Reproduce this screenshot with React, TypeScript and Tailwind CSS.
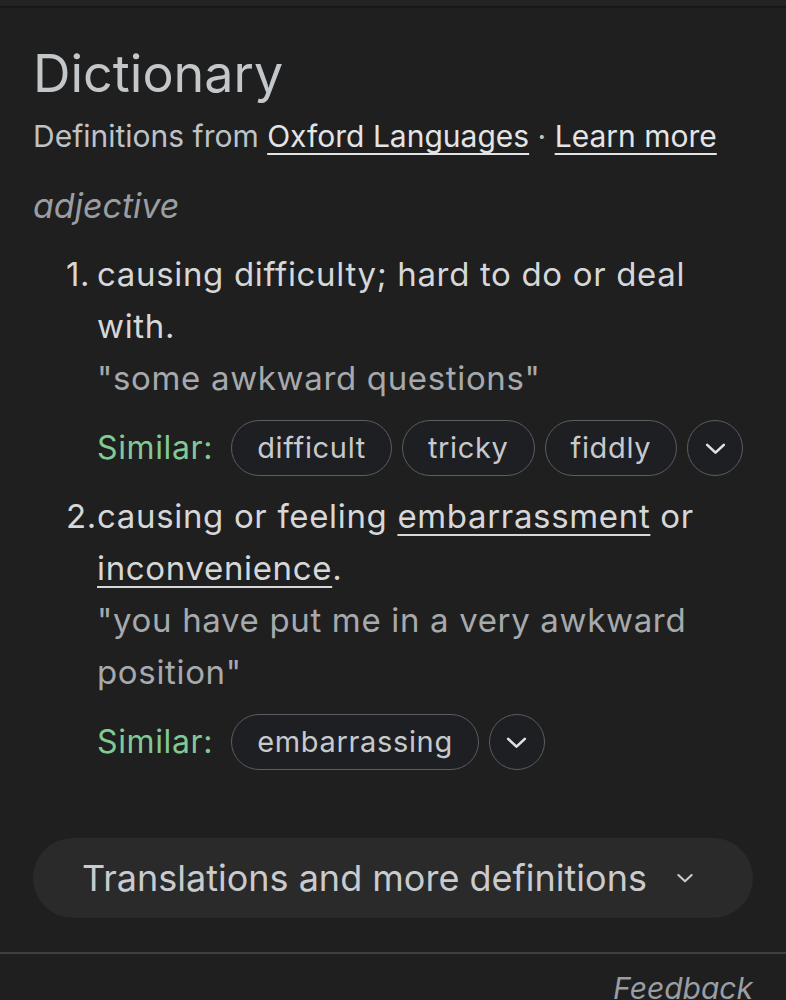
import React from 'react';

const Chevron: React.FC<{ className?: string; width?: number }> = ({ className, width = 2.5 }) => (
  <svg viewBox="0 0 24 24" className={className} fill="none" stroke="currentColor" strokeWidth={width} strokeLinecap="round" strokeLinejoin="round">
    <path d="M4 8.5l8 7.5 8-7.5" />
  </svg>
);

const Chip: React.FC<{ label: string }> = ({ label }) => (
  <span className="h-[56px] px-[25px] flex items-center rounded-full border border-[#5a5d62] bg-[#1e1f22] text-[29px] text-[#c7c9cc]">
    {label}
  </span>
);

const MoreChip = () => (
  <span className="h-[56px] w-[56px] flex items-center justify-center rounded-full border border-[#5a5d62] bg-[#1e1f22] text-[#dfe1e5]">
    <Chevron className="w-[25px] h-[25px]" />
  </span>
);

const Similar: React.FC<{ words: string[] }> = ({ words }) => (
  <div className="flex items-center gap-[10px] mt-[16px]">
    <span className="text-[32px] tracking-[0.02em] text-[#81c995] mr-[8px]">Similar:</span>
    {words.map(w => <Chip key={w} label={w} />)}
    <MoreChip />
  </div>
);

export default function App() {
  return (
    <div className="w-[786px] h-[1000px] overflow-hidden bg-[#1f1f1f] text-[#d6d7d9]" style={{ fontFamily: 'Inter, Roboto, sans-serif' }}>
      <div className="h-[8px] bg-[#232323] border-b-2 border-[#181818]" />
      <div className="px-[33px]">
        <h1 className="text-[52px] leading-[56px] mt-[38px] text-[#c4c7c9]">Dictionary</h1>
        <p className="text-[30px] leading-[40px] mt-[14px] text-[#bfc2c6]">
          Definitions from <span className="underline underline-offset-[6px] decoration-2 text-[#e3e4e6]">Oxford Languages</span> · <span className="underline underline-offset-[6px] decoration-2 text-[#e3e4e6]">Learn more</span>
        </p>
        <p className="italic text-[34px] leading-[40px] mt-[30px] text-[#9a9ea3]">adjective</p>

        <ol className="mt-[22px] text-[33px] tracking-[0.02em] leading-[52px]">
          <li className="flex">
            <span className="w-[31px] shrink-0 ml-[33px]">1.</span>
            <div className="flex-1">
              <div>causing difficulty; hard to do or deal with.</div>
              <div className="text-[#a6a9ad]">"some awkward questions"</div>
              <Similar words={['difficult', 'tricky', 'fiddly']} />
            </div>
          </li>
          <li className="flex mt-[14px]">
            <span className="w-[31px] shrink-0 ml-[33px]">2.</span>
            <div className="flex-1">
              <div>
                causing or feeling <span className="underline underline-offset-[6px] decoration-2">embarrassment</span> or{' '}
                <span className="underline underline-offset-[6px] decoration-2">inconvenience</span>.
              </div>
              <div className="text-[#a6a9ad]">"you have put me in a very awkward position"</div>
              <Similar words={['embarrassing']} />
            </div>
          </li>
        </ol>

        <button className="mt-[68px] w-full h-[80px] rounded-full bg-[#2a2a2a] flex items-center pl-[49px] gap-[28px] text-[#c9cbce]">
          <span className="text-[36px]">Translations and more definitions</span>
          <Chevron className="w-[20px] h-[20px]" width={2.5} />
        </button>
      </div>
      <div className="mt-[34px] border-t-2 border-[#3a4140]" />
      <div className="px-[33px] flex justify-end">
        <span className="italic text-[30px] text-[#9a9ea3] mt-[12px]">Feedback</span>
      </div>
    </div>
  );
}
